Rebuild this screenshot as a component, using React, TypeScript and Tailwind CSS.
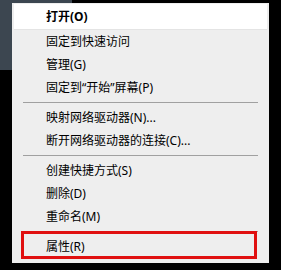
import React from 'react';

type Entry = { label: string; bold?: boolean; active?: boolean } | 'sep';

const entries: Entry[] = [
  { label: '打开(O)', bold: true, active: true },
  { label: '固定到快速访问' },
  { label: '管理(G)' },
  { label: '固定到“开始”屏幕(P)' },
  'sep',
  { label: '映射网络驱动器(N)...' },
  { label: '断开网络驱动器的连接(C)...' },
  'sep',
  { label: '创建快捷方式(S)' },
  { label: '删除(D)' },
  { label: '重命名(M)' },
  'sep',
  { label: '属性(R)' },
];

const App: React.FC = () => {
  return (
    <div
      className="relative w-[281px] h-[270px] bg-black overflow-hidden"
      style={{ fontFamily: '"Noto Sans", "Noto Sans CJK SC", sans-serif' }}
    >
      {/* window behind the menu */}
      <div className="absolute left-0 top-0 w-[72px] h-[70px] bg-[#3c4650]" />

      <div className="absolute left-[12px] top-[3px] w-[257px] h-[260px] bg-[#eeeeee] pt-[1px]">
        {entries.map((e, i) =>
          e === 'sep' ? (
            <div key={i} className="h-[7px] flex items-center px-[11px]">
              <div className="h-px w-full bg-[#a0a0a0]" />
            </div>
          ) : (
            <div
              key={i}
              className={`flex items-center text-[12px] leading-none text-black ${
                e.active
                  ? 'h-[26px] mx-[2px] pl-[32px] bg-white border-b border-[#e4e4e4]'
                  : 'h-[23px] pl-[34px]'
              } ${e.bold ? 'font-bold' : ''}`}
            >
              {e.label}
            </div>
          )
        )}

        {/* red annotation box */}
        <div className="absolute left-[9px] top-[228px] w-[236px] h-[28px] border-[3px] border-[#e01010]" />
      </div>
    </div>
  );
};

export default App;
